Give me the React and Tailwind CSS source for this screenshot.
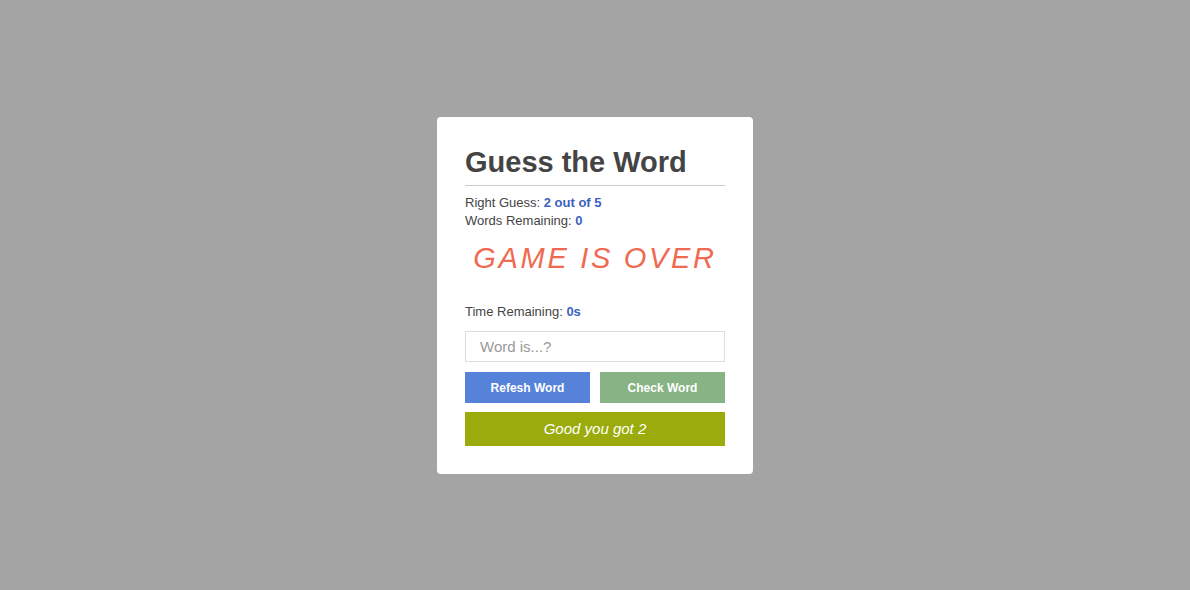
import React from 'react';

const App = () => {
  return (
    <div className="w-full h-[590px] bg-[#a4a4a4] flex items-start justify-center pt-[117px] font-['Liberation_Sans',Arial,sans-serif]">
      <div className="w-[316px] h-[357px] bg-white rounded-[4px] px-[28px] pt-[28px]">
        {/* --- Header --- */}
        <h1 className="text-[29px] leading-[34px] font-bold text-[#444]">Guess the Word</h1>
        <div className="h-px bg-[#ccc] mt-[6px]" />

        {/* --- Stats --- */}
        <div className="mt-[8px] text-[13px] leading-[18px] text-[#444]">
          <p>Right Guess: <span className="font-bold text-[#3b62bf]">2 out of 5</span></p>
          <p>Words Remaining: <span className="font-bold text-[#3b62bf]">0</span></p>
        </div>

        <div className="mt-[9px] h-[40px] flex items-center justify-center text-[29px] italic tracking-[2.7px] text-[#ef6a50]">
          GAME IS OVER
        </div>

        <p className="mt-[24px] text-[13px] leading-[18px] text-[#444]">
          Time Remaining: <span className="font-bold text-[#3b62bf]">0s</span>
        </p>

        {/* --- Controls --- */}
        <input
          type="text"
          placeholder="Word is...?"
          className="mt-[10px] w-full h-[31px] border border-[#ddd] px-[14px] text-[15px] text-[#444] placeholder:text-[#999] outline-none"
        />

        <div className="mt-[10px] flex gap-[10px]">
          <button className="flex-1 h-[31px] bg-[#5682d9] text-white text-[12px] font-bold">Refesh Word</button>
          <button className="flex-1 h-[31px] bg-[#88b384] text-white text-[12px] font-bold">Check Word</button>
        </div>

        <div className="mt-[9px] h-[34px] bg-[#9aab0b] flex items-center justify-center text-white italic text-[15px]">
          Good you got 2
        </div>
      </div>
    </div>
  );
};

export default App;
